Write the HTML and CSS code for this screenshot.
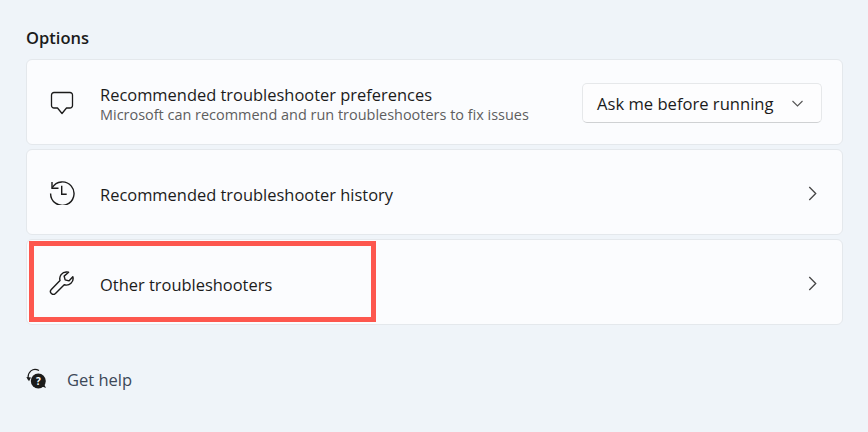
FILE: index.html
```html
<!DOCTYPE html>
<html lang="en">
<head>
<meta charset="utf-8">
<title>Options</title>
<link rel="stylesheet" href="styles.css">
</head>
<body>
<main class="page">
  <h2 class="section-title">Options</h2>
  <div class="cards">
    <div class="card">
      <svg class="icon" viewBox="0 0 26 26" fill="none" stroke="#1b1b1b" stroke-width="1.3" stroke-linejoin="round" stroke-linecap="round"><path d="M5 3.500H21a2.500 2.500 0 0 1 2.500 2.500V16.500a2.500 2.500 0 0 1-2.500 2.500H17.500L13 24.500 8.500 19H5a2.500 2.500 0 0 1-2.500-2.500V6A2.500 2.500 0 0 1 5 3.500Z"/></svg>
      <div class="labels labels-stacked">
        <div class="title">Recommended troubleshooter preferences</div>
        <div class="subtitle">Microsoft can recommend and run troubleshooters to fix issues</div>
      </div>
      <div class="select">
        <span class="select-text">Ask me before running</span>
        <svg class="select-chevron" viewBox="0 0 11 7" fill="none" stroke="#555" stroke-width="1.1"><path d="M.5 1 5.500 6 10.500 1"/></svg>
      </div>
    </div>
    <div class="card">
      <svg class="icon" viewBox="0 0 26 26" fill="none" stroke="#1b1b1b" stroke-width="1.4"><path d="M3.200 8.700A11.700 11.700 0 1 1 1.600 14.500"/><path d="M3 3V9.300H9.500"/><path d="M12.700 6.700V15.300H17.700"/></svg>
      <div class="labels"><div class="title">Recommended troubleshooter history</div></div>
      <svg class="chevron" viewBox="0 0 8 14" fill="none" stroke="#444" stroke-width="1.2"><path d="M1 1 7 7 1 13"/></svg>
    </div>
    <div class="card card-marked">
      <svg class="icon" viewBox="0 0 26 26" fill="none" stroke="#1b1b1b" stroke-width="1.4" stroke-linejoin="round"><path transform="translate(.8 1.800) scale(1.010)" d="M16.500 1.200a6.600 6.600 0 0 0-6.400 8.400L1.500 18.400a2.900 2.900 0 0 0 4.100 4.100l8.700-8.700a6.600 6.600 0 0 0 8.500-8L18.900 10l-3.700-1-1-3.700 4.400-3.900a6.600 6.600 0 0 0-2.600-.2Z"/></svg>
      <div class="labels"><div class="title">Other troubleshooters</div></div>
      <svg class="chevron" viewBox="0 0 8 14" fill="none" stroke="#444" stroke-width="1.2"><path d="M1 1 7 7 1 13"/></svg>
      <div class="highlight"></div>
    </div>
  </div>
  <div class="help">
    <svg class="help-icon" viewBox="0 0 21 21"><path d="M2.300 11.500C1 4 7 -1 13 2.500" fill="none" stroke="#1b1b1b" stroke-width="1.200"/><path d="M.3 9 5 9.500 3 13.300Z" fill="#1b1b1b"/><circle cx="12.300" cy="13" r="7.500" fill="#1b1b1b"/><path d="M15 18 17.500 15 20 20Z" fill="#1b1b1b"/><text x="12.300" y="17" class="help-mark">?</text></svg>
    <span class="help-text">Get help</span>
  </div>
</main>
</body>
</html>
```

FILE: styles.css
```css
* { box-sizing: border-box; }
html, body { margin: 0; padding: 0; }
body {
  width: 868px;
  height: 432px;
  overflow: hidden;
  background: #eff4f9;
  font-family: "Open Sans", "Noto Sans", sans-serif;
  color: #1b1b1b;
}
.page { padding: 26px 25px 0 26px; }
.section-title {
  margin: 0 0 10px;
  font-size: 16.5px;
  line-height: 23px;
  font-weight: 600;
}
.cards { display: flex; flex-direction: column; gap: 4px; }
.card {
  position: relative;
  display: flex;
  align-items: center;
  height: 86px;
  padding: 0 20px 0 22px;
  background: #fbfcfe;
  border: 1px solid #e4e8ec;
  border-radius: 6px;
}
.icon { width: 26px; height: 26px; flex: none; margin-right: 25px; }
.labels { flex: 1; min-width: 0; padding-top: 5px; }
.labels-stacked { padding-top: 4px; }
.title { font-size: 16.45px; line-height: 21px; }
.subtitle { margin-top: 1px; font-size: 14.46px; line-height: 18px; color: #5e5e5e; }
.select {
  display: flex;
  align-items: center;
  justify-content: space-between;
  width: 240px;
  height: 40px;
  margin-top: 2px;
  padding: 0 18px 0 14px;
  background: #fdfdfe;
  border: 1px solid #e6e8ea;
  border-bottom-color: #cfd1d3;
  border-radius: 5px;
}
.select-text { font-size: 16.6px; }
.select-chevron { width: 11px; height: 7px; }
.chevron { width: 9px; height: 15px; flex: none; margin: 2px 5px 0 0; }
.highlight {
  position: absolute;
  left: 2px;
  top: 1px;
  width: 347px;
  height: 81px;
  border: 5px solid #fd574e;
}
.help { display: flex; align-items: center; margin-top: 39px; height: 30px; }
.help-icon { width: 21px; height: 21px; margin: 0 20px 2px 0; }
.help-mark { font-size: 10px; font-weight: 700; fill: #fff; text-anchor: middle; font-family: "Open Sans", sans-serif; }
.help-text { font-size: 16.5px; color: #3c4858; }
```
